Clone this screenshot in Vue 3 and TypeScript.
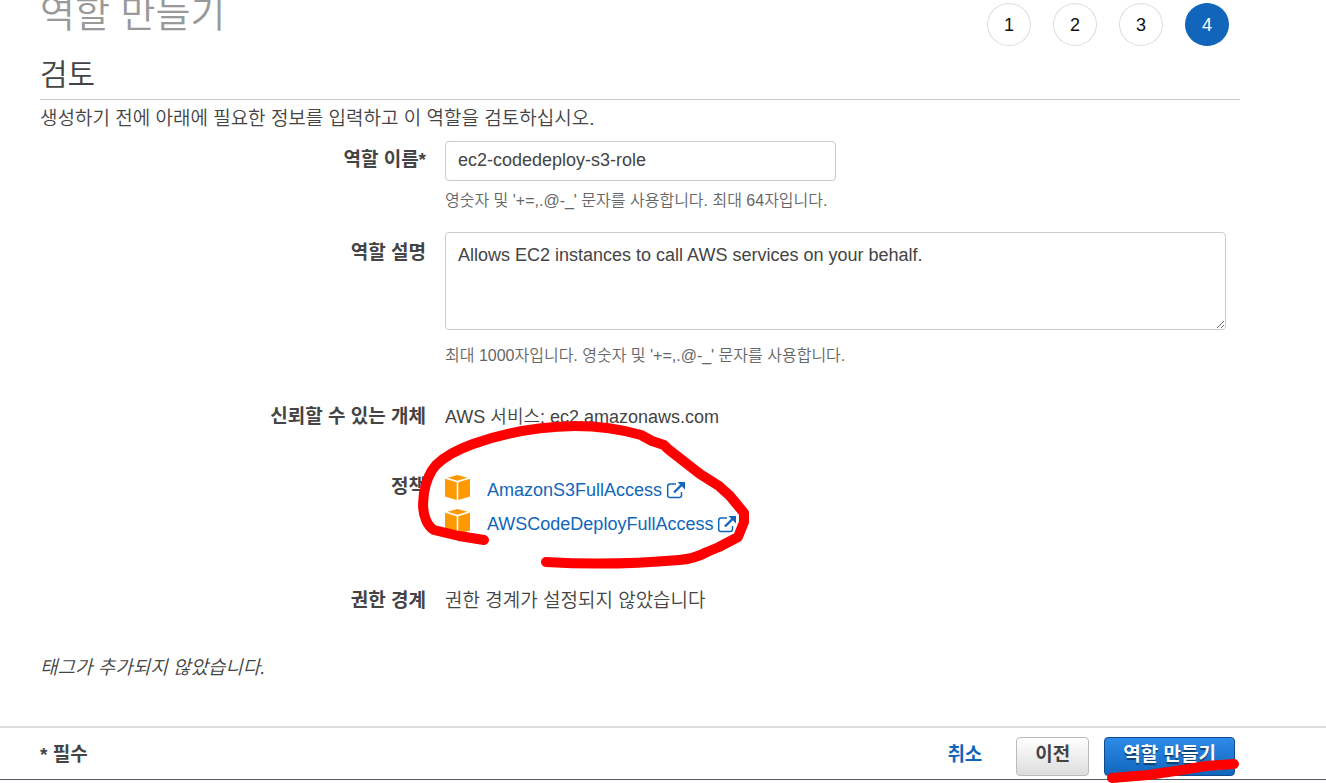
<script setup lang="ts">
import { ref } from 'vue'

const steps = [1, 2, 3, 4]
const currentStep = 4
const roleName = ref('ec2-codedeploy-s3-role')
const roleDescription = ref('Allows EC2 instances to call AWS services on your behalf.')
const policies = ['AmazonS3FullAccess', 'AWSCodeDeployFullAccess']
</script>

<template>
  <div class="page">
    <main class="content">
      <header class="top">
        <h1>역할 만들기</h1>
        <ol class="steps">
          <li v-for="s in steps" :key="s" class="step" :class="{ active: s === currentStep }">{{ s }}</li>
        </ol>
      </header>
      <h2>검토</h2>
      <p class="intro">생성하기 전에 아래에 필요한 정보를 입력하고 이 역할을 검토하십시오.</p>

      <form id="role-form" class="form" @submit.prevent>
        <div class="row name-row">
          <label class="label" for="role-name">역할 이름*</label>
          <div class="field">
            <input id="role-name" v-model="roleName" type="text" />
            <p class="hint">영숫자 및 '+=,.@-_' 문자를 사용합니다. 최대 64자입니다.</p>
          </div>
        </div>
        <div class="row desc-row">
          <label class="label" for="role-desc">역할 설명</label>
          <div class="field">
            <textarea id="role-desc" v-model="roleDescription"></textarea>
            <p class="hint">최대 1000자입니다. 영숫자 및 '+=,.@-_' 문자를 사용합니다.</p>
          </div>
        </div>
        <div class="row trust-row">
          <div class="label">신뢰할 수 있는 개체</div>
          <div class="field">AWS 서비스: ec2.amazonaws.com</div>
        </div>
        <div class="row policy-row">
          <div class="label">정책</div>
          <div class="field">
            <ul class="policies">
              <li v-for="p in policies" :key="p">
                <svg class="box" viewBox="0 0 25 25" aria-hidden="true">
                  <path d="M12.500 0 22.500 2.700 12.500 5.800 2.500 2.700Z" fill="#f90" />
                  <path d="M0 3.800 11.700 7.300V25L0 21.500ZM25 3.800 13.300 7.300V25L25 21.500Z" fill="#f90" />
                </svg>
                <a href="#">{{ p }}
                  <svg class="ext" viewBox="0 0 20 18" aria-hidden="true">
                    <path d="M10 3H4Q1.700 3 1.700 5.300v8.900Q1.700 16.500 4 16.500h9.300Q15.500 16.500 15.500 14.200V11" fill="none" stroke="#1166bb" stroke-width="1.500" />
                    <path d="m8 11.500 8-8" fill="none" stroke="#1166bb" stroke-width="2.400" />
                    <path d="M11.500 1H19v7.500Z" fill="#1166bb" />
                  </svg>
                </a>
              </li>
            </ul>
            <svg class="loop" viewBox="415 418 340 152" aria-hidden="true">
              <path d="M484 540 459 536 434 530Q429 527 426 520C422 511 423 502 424 493Q427 475 436 465Q448 453 473 444Q520 427 575 426Q610 426 641 435L652 441 664 445 668 449 700 474 719 486 730 496 744 513V522L738 537 719 547 707 552Q694 559 679 560Q610 566 546 562" />
            </svg>
          </div>
        </div>
        <div class="row boundary-row">
          <div class="label">권한 경계</div>
          <div class="field boundary">권한 경계가 설정되지 않았습니다</div>
        </div>
      </form>
      <p class="tags">태그가 추가되지 않았습니다.</p>
    </main>

    <footer class="footer">
      <div class="bar">
        <strong class="required">* 필수</strong>
        <div class="actions">
          <a href="#" class="cancel">취소</a>
          <button type="button" class="btn">이전</button>
          <button type="submit" form="role-form" class="btn primary">
            역할 만들기
            <svg class="underline" viewBox="1105 758 136 26" aria-hidden="true">
              <path d="m1113 778 36-3 34-5 24-4 28-2" />
            </svg>
          </button>
        </div>
      </div>
    </footer>
  </div>
</template>

<style>
body {
  margin: 0;
  background: #fff;
}
</style>

<style scoped>
.page {
  box-sizing: border-box;
  min-height: 100vh;
  display: flex;
  flex-direction: column;
  padding-bottom: 3px;
  overflow: hidden;
  color: #444;
  font: 18px/24px "Liberation Sans", "Noto Sans CJK KR", sans-serif;
}
.content {
  padding: 0 86px 0 40px;
}
h1, h2, p, ul, ol {
  margin: 0;
  padding: 0;
  list-style: none;
}
.top {
  height: 50px;
  display: flex;
  justify-content: space-between;
}
h1 {
  color: #999;
  font-size: 38px;
  font-weight: 350;
  line-height: 28px;
}
.steps {
  display: flex;
  gap: 22px;
  padding: 3px 11px 0 0;
}
.step {
  box-sizing: border-box;
  width: 44px;
  height: 43px;
  border: 1px solid #ddd;
  border-radius: 50%;
  color: #111;
  line-height: 42px;
  text-align: center;
}
.step.active {
  border-color: #16b;
  background: #16b;
  color: #fff;
}
h2 {
  height: 49px;
  border-bottom: 1px solid #ccc;
  font-size: 30px;
  font-weight: 350;
  line-height: 50px;
}
.intro {
  padding: 7px 0 10px;
}
.intro, .tags, .boundary, .label, .bar {
  font-size: 19px;
}
.intro, .field, .tags {
  font-weight: 350;
}
.row {
  display: grid;
  grid-template-columns: 386px 1fr;
  column-gap: 19px;
}
.label {
  font-weight: 700;
  text-align: right;
}
.name-row .label {
  padding-top: 7px;
}
.desc-row .label {
  padding-top: 9px;
}
.trust-row .label {
  padding-top: 1px;
}
.field {
  position: relative;
}
input, textarea {
  display: block;
  box-sizing: border-box;
  border: 1px solid #ccc;
  border-radius: 4px;
  background: #fff;
  color: #444;
  font: inherit;
  outline: none;
}
input {
  width: 391px;
  height: 40px;
  padding: 0 12px 2px;
}
textarea {
  width: calc(100% - 14px);
  height: 98px;
  padding: 10px 12px;
  resize: both;
}
.hint {
  color: #666;
  font-size: 16px;
  line-height: 20px;
}
.name-row .hint {
  padding: 10px 0 21px;
}
.desc-row .hint {
  padding: 16px 0 38px;
}
.trust-row .field {
  padding-top: 1px;
}
.trust-row {
  padding-bottom: 43px;
}
.policy-row {
  padding-bottom: 49px;
}
.policy-row .label {
  padding-top: 3px;
}
.policies li {
  display: flex;
  align-items: flex-start;
  gap: 17px;
  height: 34px;
}
.box {
  width: 25px;
  height: 25px;
  margin-top: 3px;
}
a {
  color: #16b;
  text-decoration: none;
}
.policies a {
  display: flex;
  align-items: center;
  gap: 4px;
  padding-top: 6px;
}
.ext {
  width: 20px;
  height: 18px;
}
.loop {
  position: absolute;
  left: -30px;
  top: -54px;
  width: 340px;
  height: 152px;
  pointer-events: none;
}
.loop path, .underline path {
  fill: none;
  stroke: #f00;
  stroke-width: 10px;
  stroke-linecap: round;
  stroke-linejoin: round;
}
.tags {
  padding-top: 43px;
  font-style: italic;
}
.footer {
  margin-top: auto;
  border-top: 2px solid #ddd;
  border-bottom: 1px solid #545b64;
}
.bar {
  display: flex;
  align-items: center;
  justify-content: space-between;
  height: 51px;
  padding: 0 91px 0 40px;
}
.required, .cancel {
  padding-top: 2px;
}
.actions {
  display: flex;
  align-items: center;
}
.cancel {
  margin-right: 34px;
  font-weight: 700;
}
.btn {
  position: relative;
  box-sizing: border-box;
  height: 39px;
  margin-top: 6px;
  padding: 0 18px 3px;
  border: 1px solid #bbb;
  border-radius: 4px;
  background: linear-gradient(#fff, #ddd);
  color: #444;
  font: inherit;
  font-weight: 700;
}
.primary {
  margin-left: 15px;
  border-color: #0f4b8c;
  background: linear-gradient(#2e8bea, #1166bb);
  color: #fff;
  text-shadow: 0 2px 1px #0f4070;
}
.underline {
  position: absolute;
  left: -1px;
  top: 20px;
  width: 136px;
  height: 26px;
  pointer-events: none;
}
</style>
